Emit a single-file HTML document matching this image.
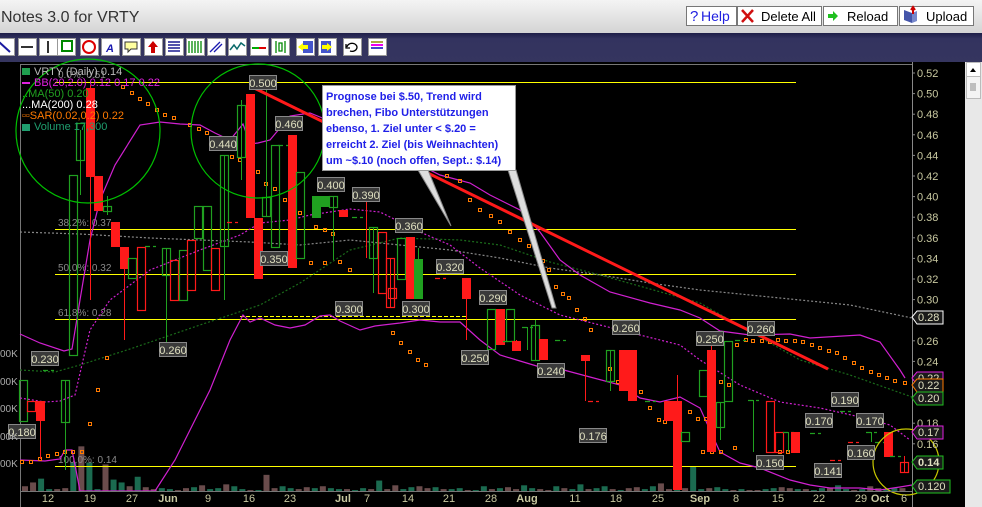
<!DOCTYPE html>
<html><head><meta charset="utf-8">
<style>
html,body{margin:0;padding:0;background:#000;width:982px;height:507px;overflow:hidden;font-family:"Liberation Sans",sans-serif}
svg{display:block}
</style></head><body>
<svg id="s" width="982" height="507" xmlns="http://www.w3.org/2000/svg" font-family="Liberation Sans, sans-serif">
<defs><linearGradient id="tb" x1="0" y1="0" x2="0" y2="1"><stop offset="0" stop-color="#f4f4f4"/><stop offset="1" stop-color="#d4d4d4"/></linearGradient>
<linearGradient id="nv" x1="0" y1="0" x2="0" y2="1"><stop offset="0" stop-color="#1e1e48"/><stop offset="0.2" stop-color="#33335f"/><stop offset="1" stop-color="#35355f"/></linearGradient></defs>
<rect x="0" y="0" width="982" height="33" fill="url(#tb)"/>
<text x="1" y="22" font-size="16" fill="#333">Notes 3.0 for VRTY</text>
<g font-size="13" fill="#000">
<rect x="686.5" y="6.5" width="50" height="19" fill="#fff" stroke="#777"/><text x="690" y="21" fill="#2020e0" font-size="15">?</text><text x="701" y="21" fill="#2020e0" font-size="14">Help</text>
<rect x="737.5" y="6.5" width="84" height="19" fill="#fff" stroke="#777"/><path d="M742 10 L753 22 M753 10 L742 22" stroke="#d01010" stroke-width="2.5"/><text x="761" y="21">Delete All</text>
<rect x="823.5" y="6.5" width="74" height="19" fill="#fff" stroke="#777"/><path d="M828 14 h5 v-3 l5 5 l-5 5 v-3 h-5z" fill="#20c020"/><text x="847" y="21">Reload</text>
<rect x="899.5" y="6.5" width="74" height="19" fill="#fff" stroke="#777"/><path d="M904 10 l8 3 v10 l-8 -3z" fill="#4455aa"/><path d="M912 13 l5 -2 v10 l-5 2z" fill="#7788cc"/><path d="M913 8 v6 M911 10 l2 -3 l2 3" stroke="#c00" stroke-width="2" fill="none"/><text x="926" y="21">Upload</text>
</g>
<rect x="0" y="33" width="982" height="29" fill="url(#nv)"/>
<g id="tools"></g>
<rect x="0" y="62" width="965" height="445" fill="#000"/>
<line x1="20" y1="64.5" x2="912" y2="64.5" stroke="#777"/>
<line x1="20.5" y1="64" x2="20.5" y2="507" stroke="#777"/>
<line x1="912.5" y1="62" x2="912.5" y2="507" stroke="#888"/>
<rect x="965" y="62" width="17" height="445" fill="#e8e8e8"/>
<rect x="966.5" y="62.5" width="14" height="14" fill="#fff" stroke="#bbb"/><path d="M970 72 l3 -4 l3 4z" fill="#000"/>
<rect x="966.5" y="76.5" width="14" height="22" fill="#f4f4f4" stroke="#bbb"/>
<g stroke="#888" stroke-width="1"><path d="M970 84h6M970 86h6M970 88h6M970 90h6"/></g>
<g id="vol"></g>
<g stroke="#ffff00" stroke-width="1">
<line x1="55" y1="82.5" x2="796" y2="82.5"/><line x1="55" y1="229.5" x2="796" y2="229.5"/><line x1="55" y1="274.5" x2="796" y2="274.5"/><line x1="55" y1="319.5" x2="796" y2="319.5"/><line x1="55" y1="466.5" x2="796" y2="466.5"/>
<line x1="240" y1="316.5" x2="467" y2="316.5" stroke-dasharray="4,2"/>
</g>
<g font-size="10" fill="#8a8a8a">
<text x="58" y="78">0.0%: 0.51</text><text x="58" y="226">38.2%: 0.37</text><text x="58" y="271">50.0%: 0.32</text><text x="58" y="316">61.8%: 0.28</text><text x="58" y="463">100.0%: 0.14</text>
</g>
<g fill="none" stroke-width="1.2">
<polyline stroke="#888" stroke-dasharray="2,2" points="20,232 80,234 150,238 250,242 300,245 350,240 400,245 450,250 500,258 550,268 600,275 650,283 700,290 750,295 800,300 850,305 912,318"/>
<polyline stroke="#1a6a1a" stroke-dasharray="2,2" points="20,370 55,372 80,365 130,349 200,325 260,305 300,283 350,250 400,238 460,240 500,245 550,262 600,275 700,303 800,360 850,375 912,397"/>
<polyline stroke="#d020d0" stroke-dasharray="2,2" points="20,398 45,402 60,401 75,395 90,330 110,300 150,270 200,250 240,235 260,223 290,220 310,215 350,209 380,212 420,232 450,245 480,268 520,295 560,315 600,325 640,335 680,345 700,360 740,385 780,402 820,408 860,417 890,425 910,440"/>
<polyline stroke="#d020d0" points="20,334 40,343 64,351 72,349 80,300 90,240 100,200 115,165 140,125 160,122 180,124 200,125 215,133 230,140 243,124 250,144 258,143 270,140 290,116 310,113 320,117 350,130 380,145 420,165 440,175 470,183 490,195 520,210 540,232 560,260 580,275 610,292 650,303 680,310 700,318 720,331 750,335 790,334 810,338 860,335 880,342 900,370 905,378"/>
<polyline stroke="#d020d0" points="20,460 45,461 60,459 65,450 72,450 76,470 80,491 155,491 175,460 190,430 210,390 230,340 243,315 250,322 260,318 275,325 290,328 305,325 320,316 330,315 340,321 360,330 375,326 400,323 420,320 440,322 460,322 480,340 500,355 520,361 540,367 560,369 590,377 620,385 640,398 660,402 680,397 700,408 720,452 740,463 760,468 790,480 810,485 830,488 860,488 880,490 900,487 912,485"/>
</g>
<g id="sar" fill="none" stroke="#ff7a00" stroke-width="1"></g>
<g id="cdl"></g>
<line x1="250" y1="86" x2="828" y2="369" stroke="#ff1a1a" stroke-width="3"/>
<g fill="none" stroke="#00c000" stroke-width="1.2"><circle cx="88" cy="131" r="72"/><circle cx="258" cy="131" r="67"/></g>
<circle cx="906" cy="462" r="33" fill="none" stroke="#c8c800" stroke-width="1.2"/>
<polygon points="418,170 428,170 451,226" fill="#ddd" stroke="#888"/>
<polygon points="508,170 516,170 556,308 552,308" fill="#ddd" stroke="#888"/>
<rect x="322.5" y="85.5" width="193" height="85" fill="#fff" stroke="#999"/>
<g font-size="11" font-weight="bold" fill="#2020e8">
<text x="326" y="100">Prognose bei $.50, Trend wird</text>
<text x="326" y="116">brechen, Fibo Unterstützungen</text>
<text x="326" y="132">ebenso, 1. Ziel unter &lt; $.20 =</text>
<text x="326" y="148">erreicht 2. Ziel (bis Weihnachten)</text>
<text x="326" y="164">um ~$.10 (noch offen, Sept.: $.14)</text>
</g>
<g font-size="11">
<rect x="22" y="68" width="8" height="7" fill="#1f9f4f"/><text x="34" y="75" fill="#bbb">VRTY (Daily) 0.14</text>
<rect x="22" y="82" width="8" height="2" fill="#e020e0"/><text x="34" y="86" fill="#e020e0">BB(20,2.0) 0.12   0.17   0.22</text>
<text x="22" y="97" fill="#20a020">..MA(50) 0.20</text>
<text x="22" y="108" fill="#fff">...MA(200) 0.28</text>
<text x="22" y="119" fill="#ff7a00">▫▫SAR(0.02,0.2) 0.22</text>
<rect x="22" y="124" width="8" height="7" fill="#1f9f6f"/><text x="34" y="130" fill="#1f9f6f">Volume 17,300</text>
</g>
<g id="lbl"></g>
<g font-size="11" fill="#c8c8a0" id="ax"></g>
<g font-size="10" fill="#aaa">
<text x="0" y="357">00K</text><text x="0" y="385">00K</text><text x="0" y="412">00K</text><text x="0" y="440">00K</text><text x="0" y="467">00K</text>
</g>
<line x1="20" y1="491.5" x2="912" y2="491.5" stroke="#777"/>
<g font-size="11" fill="#c8c8a0" id="dt"></g>
</svg>
<script>
var NS="http://www.w3.org/2000/svg";
function el(p,t,a,txt){var e=document.createElementNS(NS,t);for(var k in a)e.setAttribute(k,a[k]);if(txt!=null)e.textContent=txt;document.getElementById(p).appendChild(e);return e;}
var tx=[-4,18,39,57,80,101,122,144,165,186,207,228,250,271,296,318,343,368];
tx.forEach(function(x,i){el("tools","rect",{x:x+.5,y:38.5,width:18,height:17,fill:"#fff",stroke:"#999"});});
el("tools","path",{d:"M-2 41 L10 52",stroke:"#1a1aa0","stroke-width":2});
el("tools","path",{d:"M21 47h12",stroke:"#333","stroke-width":2});
el("tools","path",{d:"M48 41v12",stroke:"#333","stroke-width":2});
el("tools","rect",{x:62,y:41,width:10,height:10,fill:"none",stroke:"#080","stroke-width":2});
el("tools","circle",{cx:89,cy:47,r:6,fill:"none",stroke:"#d00","stroke-width":2});
el("tools","text",{x:106,y:52,"font-size":11,"font-weight":"bold","font-style":"italic",fill:"#1a1ab0"},"A");
el("tools","path",{d:"M125 42h12v7h-6l-3 3v-3h-3z",fill:"#ffffa0",stroke:"#333"});
el("tools","path",{d:"M153 41l-5 6h3v6h4v-6h3z",fill:"#c00"});
el("tools","path",{d:"M168 42h12M168 45h12M168 48h12M168 51h12",stroke:"#1a1a90","stroke-width":1.5});
el("tools","path",{d:"M189 41v12M192 41v12M195 41v12M198 41v12M201 41v12",stroke:"#080","stroke-width":1.3});
el("tools","path",{d:"M210 52l10-10M214 52l8-8",stroke:"#1a1ab0","stroke-width":1.3});
el("tools","path",{d:"M230 50l4-5 3 4 4-6 4 3",stroke:"#0a6a6a",fill:"none","stroke-width":1.5});
el("tools","path",{d:"M252 48h7",stroke:"#0a0","stroke-width":2});el("tools","path",{d:"M259 48h7",stroke:"#d00","stroke-width":2});
el("tools","path",{d:"M276 41v12M285 41v12M279 43v8h3v-8z",stroke:"#080",fill:"none","stroke-width":1.3});
el("tools","rect",{x:303,y:41,width:10,height:12,fill:"#4455cc"});el("tools","path",{d:"M298 47l5-4v8z M303 45h5v4h-5",fill:"#ff0"});
el("tools","rect",{x:321,y:41,width:10,height:12,fill:"#4455cc"});el("tools","path",{d:"M332 47l-5-4v8z M327 45h-5v4h5",fill:"#ff0"});
el("tools","path",{d:"M347 47a5 4 0 1 1 3 4M346 44v4h4",stroke:"#000",fill:"none","stroke-width":1.3});
el("tools","path",{d:"M371 41h12v2h-12z",fill:"#aa4"});el("tools","path",{d:"M371 44h12v2h-12z",fill:"#e0e"});el("tools","path",{d:"M371 47h12v2h-12z",fill:"#44c"});
var vh=[5,9,13,2,2,3,30,47,30,2,28,12,9,5,15,4,2,3,2,1,3,4,6,2,3,7,5,2,1,1,17,3,5,3,2,4,3,5,3,2,2,1,3,2,11,2,6,2,4,5,3,4,2,2,3,1,1,5,2,3,4,2,6,3,2,1,5,3,2,7,2,3,5,2,1,3,4,2,5,8,2,2,3,26,2,3,4,2,1,2,1,1,2,3,4,3,2,2,1,3,3,6,2,1,2,5,3,2,3,3,2,16,3,1,6];
for(var i=0;i<vh.length;i++){var x=22+i*8.05;if(x>905)break;var h=vh[i]*0.95;el("vol","rect",{x:x,y:491-h,width:6,height:h,fill:(i%3==1||i%5==0)?"#6a4c4c":"#1b6b50"});}
var sar=[[22,462],[31,462],[40,459],[48,456],[57,454],[65,452],[73,452],[82,452],[90,424],[98,390],[107,358],[123,87],[132,93],[140,99],[148,104],[157,110],[165,115],[174,118],[190,125],[199,129],[207,133],[217,142],[232,157],[240,160],[250,162],[258,172],[266,184],[275,189],[285,200],[292,205],[300,213],[316,227],[325,230],[333,234],[340,262],[350,270],[325,263],[311,263],[393,333],[401,343],[410,352],[418,360],[426,365],[432,160],[440,168],[447,176],[460,181],[470,200],[480,210],[491,216],[500,222],[510,232],[520,240],[529,246],[538,253],[543,261],[549,270],[556,287],[563,294],[569,298],[577,310],[585,319],[591,330],[610,369],[618,382],[626,385],[634,398],[641,392],[650,408],[659,420],[665,422],[690,412],[698,419],[706,419],[714,375],[721,382],[729,385],[737,345],[746,340],[753,341],[762,341],[770,342],[778,340],[786,341],[795,341],[803,342],[812,345],[820,348],[829,351],[837,353],[845,358],[854,363],[862,368],[871,372],[879,375],[887,378],[895,381],[905,383],[703,452],[712,452],[721,452],[735,448],[780,452],[788,452]];
sar.forEach(function(p){el("sar","rect",{x:p[0]-1.5,y:p[1]-1.5,width:3,height:3});});
var C=[[23,380,421,"gh"],[31,401,411,"rh"],[40,401,421,"rf",401,459],[48,370,372,"gd"],[65,380,422,"gh",380,470],[73,175,355,"gh"],[80,123,160,"gh",130,195],[90,88,177,"rf",85,300],[98,176,211,"rf"],[107,206,211,"gh",196,215],[115,222,247,"rf"],[124,247,269,"rf",247,340],[132,258,278,"gh"],[141,247,310,"rh"],[150,246,247,"gd"],[166,248,275,"gh",248,355],[174,260,300,"rh"],[183,250,300,"gh"],[191,240,290,"rh"],[198,206,238,"gh"],[207,206,270,"gh"],[215,248,290,"rh"],[224,155,246,"gh",155,300],[232,222,222,"rd"],[241,105,157,"gh",100,180],[250,94,218,"rf"],[258,218,279,"rf"],[266,197,216,"gh",88,216],[275,145,247,"gh"],[283,145,145,"gd"],[292,135,268,"rf"],[300,172,258,"gh"],[316,196,218,"gf"],[325,196,207,"gf"],[333,196,207,"gh",196,260],[343,210,217,"rf"],[357,217,217,"gd"],[366,200,258,"rd",200,258],[373,227,258,"gh",227,293],[382,232,293,"rh"],[390,258,307,"rh",258,307],[392,288,298,"rh"],[401,238,279,"gh"],[410,237,299,"rf"],[418,259,299,"gf",248,299],[440,278,278,"rd"],[466,278,299,"rf",278,340],[491,309,349,"gh"],[500,309,345,"rf"],[508,341,341,"gd"],[510,309,341,"gh"],[516,341,351,"rf",340,351],[527,327,350,"gd",327,350],[535,325,360,"gh",320,360],[543,339,360,"rf"],[560,340,340,"gd"],[585,355,361,"rf",355,401],[593,401,401,"rd"],[610,350,381,"gh",350,391],[623,350,391,"rf"],[632,350,401,"rf"],[650,401,401,"gd"],[668,401,421,"rf"],[677,401,490,"rf",375,490],[685,432,441,"gh"],[703,370,396,"gh"],[711,350,452,"rf",344,452],[720,402,427,"gh",402,440],[728,341,401,"gh"],[740,340,340,"gd"],[753,400,452,"gd",400,452],[770,401,452,"rh"],[779,432,452,"rh"],[788,432,452,"gd",432,452],[795,432,453,"rf"],[815,433,433,"gd"],[835,460,460,"rd"],[845,411,411,"gd"],[853,442,442,"rd"],[871,432,442,"gd",432,442],[880,442,442,"gd"],[888,432,457,"rf"],[895,456,456,"gd"],[904,462,472,"rh",456,472]];
C.forEach(function(c){var x=c[0],t=c[1],b=c[2],ty=c[3];var col=ty[0]=="r"?"#ff1a1a":"#20a020";
 if(c[4]!=null)el("cdl","line",{x1:x+.5,y1:c[4],x2:x+.5,y2:c[5],stroke:col});
 if(ty=="gd"||ty=="rd"){el("cdl","line",{x1:x-5,y1:t+.5,x2:x+6,y2:t+.5,stroke:col,"stroke-width":1.2,"stroke-dasharray":"5,3"});return;}
 if(ty=="rf"||ty=="gf")el("cdl","rect",{x:x-4,y:t,width:9,height:Math.max(b-t,2),fill:col});
 else el("cdl","rect",{x:x-3.5,y:t+.5,width:8,height:Math.max(b-t,2),fill:"none",stroke:col,"stroke-width":1.2});});
var L=[["0.230",45,359],["0.180",22,432],["0.260",173,350],["0.440",223,144],["0.500",263,83],["0.460",289,124],["0.350",274,259],["0.400",331,185],["0.390",366,195],["0.360",409,226],["0.300",349,309],["0.300",416,309],["0.320",450,267],["0.290",493,298],["0.250",475,358],["0.240",551,371],["0.176",593,436],["0.260",626,328],["0.250",710,339],["0.260",761,329],["0.150",770,463],["0.141",828,471],["0.190",845,400],["0.170",819,421],["0.170",870,421],["0.160",861,453]];
L.forEach(function(l){var x=l[1],y=l[2];el("lbl","rect",{x:x-13.5,y:y-7.5,width:27,height:14,fill:"#3a3a3a",stroke:"#888"});el("lbl","text",{x:x,y:y+4,"font-size":11,fill:"#e0e0c0","text-anchor":"middle"},l[0]);});
var vals=[0.52,0.50,0.48,0.46,0.44,0.42,0.40,0.38,0.36,0.34,0.32,0.30,0.26,0.24,0.18,0.16];
vals.forEach(function(v){var y=73+(0.52-v)*1030;el("ax","text",{x:917,y:y+4},v.toFixed(2));el("ax","line",{x1:912,y1:y,x2:915,y2:y,stroke:"#888"});});
var B=[["0.28",317,"#fff"],["0.22",378,"#e020e0"],["0.22",385,"#ff7a00"],["0.20",398,"#20c020"],["0.17",432,"#e020e0"],["0.14",462,"#20c020"],["0.120",486,"#20c020"]];
B.forEach(function(b){el("ax","path",{d:"M912 "+b[1]+" l5 -6 h"+(b[0].length>4?33:26)+" v13 h-"+(b[0].length>4?33:26)+"z",fill:"#1a1a1a",stroke:b[2]});var t=el("ax","text",{x:918,y:b[1]+4,fill:"#e0e0c0"},b[0]);if(b[0]=="0.14")t.setAttribute("font-weight","bold");});
var D=[["12",48],["19",90],["27",132],["Jun",168],["9",208],["16",249],["23",290],["Jul",343],["7",367],["14",408],["21",449],["28",491],["Aug",527],["11",575],["18",616],["25",658],["Sep",700],["8",736],["15",778],["22",819],["29",861],["Oct",880],["6",904]];
D.forEach(function(d){var t=el("dt","text",{x:d[1],y:502,"text-anchor":"middle"},d[0]);if(isNaN(d[0]))t.setAttribute("font-weight","bold");});
</script>
</body></html>
